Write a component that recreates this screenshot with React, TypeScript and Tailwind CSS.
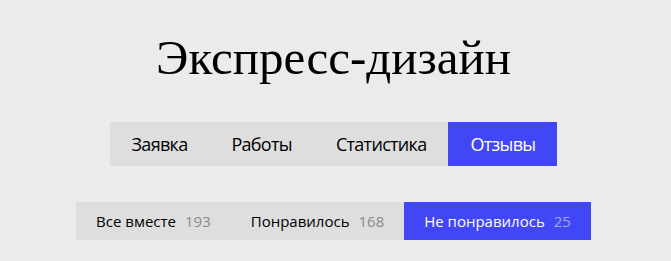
import React from "react";

const tabs = ["Заявка", "Работы", "Статистика", "Отзывы"];
const filters: [string, number][] = [
  ["Все вместе", 193],
  ["Понравилось", 168],
  ["Не понравилось", 25],
];

export default function App() {
  return (
    <div className="min-h-screen bg-[#ebebeb] flex flex-col items-center pr-1 font-['Open_Sans',sans-serif]">
      <h1 className="pt-[33px] text-[49px] leading-[50px] text-black font-['Liberation_Serif',serif] font-normal">
        Экспресс-дизайн
      </h1>
      <nav className="mt-[39px] flex bg-[#dedede]">
        {tabs.map((t, i) => (
          <div
            key={t}
            className={
              i === 3
                ? "h-[44px] flex items-center px-[22px] text-[18px] tracking-[-0.7px] bg-[#4147f4] text-white"
                : "h-[44px] flex items-center px-[22px] text-[18px] tracking-[-0.7px] text-black"
            }
          >
            {t}
          </div>
        ))}
      </nav>
      <div className="mt-[36px] flex bg-[#dedede]">
        {filters.map(([t, n], i) => (
          <div
            key={t}
            className={
              i === 2
                ? "h-[38px] flex items-center gap-[9px] px-[20px] text-[15px] bg-[#4147f4] text-white"
                : "h-[38px] flex items-center gap-[9px] px-[20px] text-[15px] text-black"
            }
          >
            <span>{t}</span>
            <span className={i === 2 ? "text-[#a3a6f8]" : "text-[#8a8a8a]"}>{n}</span>
          </div>
        ))}
      </div>
    </div>
  );
}
